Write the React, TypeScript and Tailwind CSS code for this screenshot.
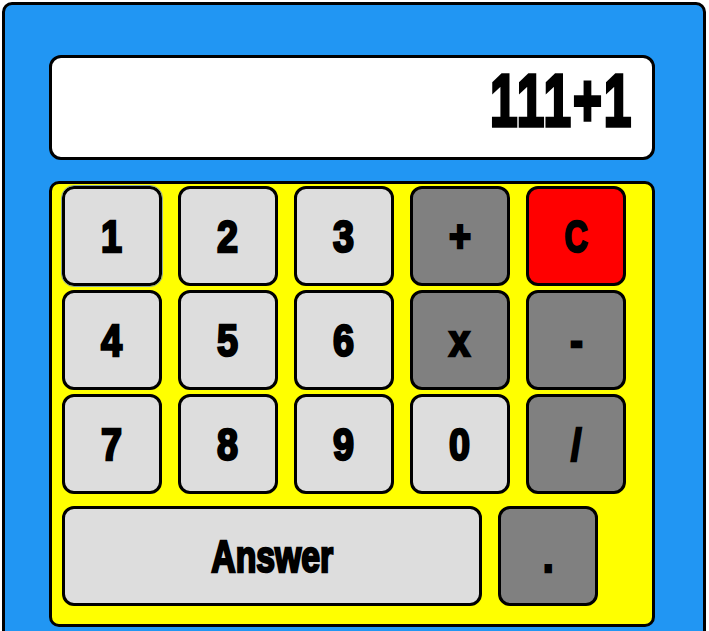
// @ts-nocheck
import React, { useState } from "react";

const font = "font-['Liberation_Sans',Arial,sans-serif] font-bold";

function Key({ label, tone = "light", wide = false, focused = false, scale = "scale-x-[0.84]" }) {
  const bg =
    tone === "red" ? "bg-[#ff0000]" : tone === "dark" ? "bg-[#808080]" : "bg-[#dddddd]";
  return (
    <button
      className={`${wide ? "w-[420px]" : "w-[100px]"} h-[100px] shrink-0 rounded-[12px] border-[3px] border-black ${bg} flex items-center justify-center text-black ${
        focused ? "outline outline-1 outline-offset-0 outline-[#8aa6a0]" : ""
      }`}
    >
      <span className={`inline-block ${scale} text-[45px] leading-none [-webkit-text-stroke:2.5px_black] ${font}`}>
        {label}
      </span>
    </button>
  );
}

export default function App() {
  const [value] = useState("111+1");

  return (
    <div className="w-[704px] h-[660px] ml-[2px] mt-[2px] rounded-[10px] border-[3px] border-black bg-[#2196f3] pl-[44px] pt-[50px] flex flex-col gap-[21px]">
      {/* display */}
      <div className="w-[606px] h-[105px] rounded-[12px] border-[3px] border-black bg-white flex justify-end items-start pt-[5px] pr-[19px]">
        <span className={`inline-block origin-right scale-x-[0.66] tracking-[3px] text-[75px] leading-none text-black [-webkit-text-stroke:3.5px_black] ${font}`}>
          {value}
        </span>
      </div>

      {/* keypad */}
      <div className="w-[606px] h-[446px] rounded-[10px] border-[3px] border-black bg-[#ffff00] pl-[10px] pt-[2px] flex flex-col">
        <div className="flex gap-[16px]">
          <Key label="1" focused />
          <Key label="2" />
          <Key label="3" />
          <Key label="+" tone="dark" />
          <Key label="C" tone="red" scale="scale-x-[0.72]" />
        </div>
        <div className="flex gap-[16px] mt-[4px]">
          <Key label="4" />
          <Key label="5" />
          <Key label="6" />
          <Key label="x" tone="dark" />
          <Key label="-" tone="dark" />
        </div>
        <div className="flex gap-[16px] mt-[4px]">
          <Key label="7" />
          <Key label="8" />
          <Key label="9" />
          <Key label="0" />
          <Key label="/" tone="dark" />
        </div>
        <div className="flex gap-[16px] mt-[12px]">
          <Key label="Answer" wide scale="scale-x-[0.75]" />
          <Key label="." tone="dark" />
        </div>
      </div>
    </div>
  );
}
